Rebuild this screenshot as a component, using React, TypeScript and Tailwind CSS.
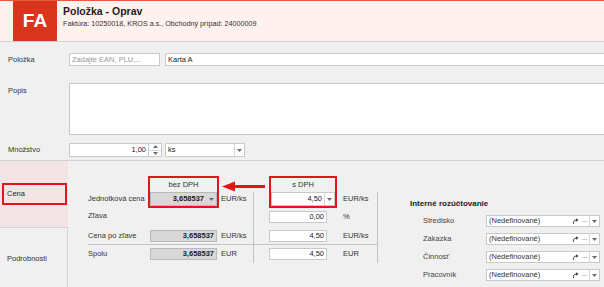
import React from "react";

const border = "border-[#c9c9c9]";

function DropArrow({ divider = true }: { divider?: boolean }) {
  return (
    <div className={`flex h-full w-[10px] shrink-0 items-center justify-center ${divider ? "border-l border-[#d6d6d6]" : ""}`}>
      <svg width="5" height="3" viewBox="0 0 5 3">
        <path d="M0 0h5L2.5 3z" fill="#6b6b6b" />
      </svg>
    </div>
  );
}

function Field({ value, gray, drop, w, className = "" }: { value?: string; gray?: boolean; drop?: boolean; w: string; className?: string }) {
  return (
    <div className={`flex h-[12px] items-center border ${gray ? "border-[#b9b9b9] bg-[#d8d8d8] font-bold" : `${border} bg-white`} ${w} ${className}`}>
      <span className="flex-1 pr-[2px] text-right leading-none text-[#222]">{value}</span>
      {drop && <DropArrow />}
    </div>
  );
}

function JumpIcon() {
  return (
    <svg width="7" height="6" viewBox="0 0 7 6">
      <path d="M1.5 6 C1 3.5 2 2 4.5 2" stroke="#444" strokeWidth="1" fill="none" />
      <path d="M4 0.2 L6.6 2 L4 3.8z" fill="#444" />
    </svg>
  );
}

function Combo({ label }: { label: string }) {
  return (
    <div className="flex h-[12px] items-center">
      <div className="w-[76px] pl-[13px] text-[#444]">{label}</div>
      <div className={`flex h-full w-[114px] items-center border ${border} bg-white`}>
        <span className="flex-1 pl-[2px] leading-none text-[#333]">(Nedefinované)</span>
        <div className="flex items-center gap-[3px] pr-[2px]">
          <JumpIcon />
          <span className="text-[7px] leading-none tracking-[-0.5px] text-[#555]">···</span>
        </div>
        <DropArrow />
      </div>
    </div>
  );
}

export default function App() {
  return (
    <div className="h-[287px] w-[604px] overflow-hidden whitespace-nowrap bg-[#f0f0f0] font-['Liberation_Sans',Arial,sans-serif] text-[7.5px] text-[#333]">
      {/* Header */}
      <header className="flex h-[42px] border-t border-b border-t-[#e85a35] border-b-[#cfcfcf] bg-[#fff1ee]">
        <div className="ml-[13px] flex w-[44px] items-center justify-center bg-[#d9341d] text-[19px] font-bold text-white">FA</div>
        <div className="pl-[6px] pt-[3px]">
          <div className="text-[10.5px] font-bold leading-[14px] text-[#1e1e1e]">Položka - Oprav</div>
          <div className="mt-[1px] text-[7.2px] leading-[10px] text-[#333]">Faktúra: 10250018, KROS a.s., Obchodný prípad: 24000009</div>
        </div>
      </header>

      {/* Form */}
      <div className="mt-[11px] flex h-[13px] items-center">
        <div className="w-[69px] pl-[8px]">Položka</div>
        <div className={`flex h-full w-[91px] items-center border ${border} bg-white pl-[2px] text-[#9a9a9a]`}>Zadajte EAN, PLU,...</div>
        <div className={`ml-[5px] -mr-[2px] flex h-full flex-1 items-center border ${border} bg-white pl-[2px] text-[#222]`}>Karta A</div>
      </div>

      <div className="mt-[17px] flex h-[52px]">
        <div className="w-[69px] pl-[8px] pt-[2px]">Popis</div>
        <div className={`-mr-[2px] h-full flex-1 border ${border} bg-white`} />
      </div>

      <div className="mt-[8px] flex h-[14px] items-center">
        <div className="w-[69px] pl-[8px]">Množstvo</div>
        <div className={`flex h-full w-[80px] items-center justify-end border ${border} bg-white pr-[2px] text-[#222]`}>1,00</div>
        <div className={`flex h-full w-[13px] flex-col border border-l-0 ${border} bg-white`}>
          <div className="flex flex-1 items-center justify-center border-b border-[#d6d6d6]">
            <svg width="5" height="3" viewBox="0 0 5 3"><path d="M0 3h5L2.5 0z" fill="#6b6b6b" /></svg>
          </div>
          <div className="flex flex-1 items-center justify-center">
            <svg width="5" height="3" viewBox="0 0 5 3"><path d="M0 0h5L2.5 3z" fill="#6b6b6b" /></svg>
          </div>
        </div>
        <div className={`ml-[3px] flex h-full w-[80px] items-center border ${border} bg-white`}>
          <span className="flex-1 pl-[2px] text-[#222]">ks</span>
          <DropArrow />
        </div>
      </div>

      <div className="mt-[3px] border-b border-[#d2d2d2]" />

      {/* Price section */}
      <div className="flex h-[126px]">
        <div className="flex w-[68px] flex-col">
          <div className="h-[66px] bg-[#f3e5e5] pt-[22px]">
            <div className="ml-[2px] flex h-[22px] w-[65px] items-center border-2 border-[#e3141b] pl-[3px] text-[#222]">Cena</div>
          </div>
          <div className="flex-1 border-t border-r border-[#d2d2d2] pl-[7px] pt-[26px] leading-[10px]">Podrobnosti</div>
        </div>

        <div className="relative flex flex-1">
          {/* labels */}
          <div className="w-[80px] pt-[15px]">
            <div className="h-[16px]" />
            <div className="flex h-[16px] items-center pl-[20px] pb-[3px]">Jednotková cena</div>
            <div className="flex h-[19px] items-center pl-[20px] pb-[3px]">Zľava</div>
            <div className="flex h-[17px] items-center pl-[20px]">Cena po zľave</div>
            <div className="ml-[20px] flex h-[19px] items-center border-t border-[#c4c4c4]">Spolu</div>
          </div>

          {/* bez DPH */}
          <div className="w-[71px] pt-[15px]">
            <div className="flex h-[32px] flex-col border-2 border-[#e3141b]">
              <div className="flex h-[14px] items-center justify-center text-[#333]">bez DPH</div>
              <Field value="3,658537" gray drop w="w-full" className="h-[14px]" />
            </div>
            <div className="h-[19px]" />
            <div className="flex h-[17px] items-center pl-[2px]">
              <Field value="3,658537" gray w="w-[67px]" />
            </div>
            <div className="flex h-[19px] items-center border-t border-[#c4c4c4] pl-[2px]">
              <Field value="3,658537" gray w="w-[67px]" />
            </div>
          </div>

          {/* units */}
          <div className="w-[34px] pt-[15px]">
            <div className="h-[16px]" />
            <div className="flex h-[16px] items-center pl-[2px] pb-[2px]">EUR/ks</div>
            <div className="h-[19px]" />
            <div className="flex h-[17px] items-center pl-[2px]">EUR/ks</div>
            <div className="flex h-[19px] items-center border-t border-[#c4c4c4] pl-[2px]">EUR</div>
          </div>

          {/* divider */}
          <div className="w-[16px] pt-[15px]">
            <div className="h-[16px]" />
            <div className="h-[52px] border-l border-[#c4c4c4]" />
            <div className="h-[19px] border-t border-l border-[#c4c4c4]" />
          </div>

          {/* s DPH */}
          <div className="w-[68px] pt-[15px]">
            <div className="flex h-[32px] flex-col border-2 border-[#e3141b]">
              <div className="flex h-[14px] items-center justify-center text-[#333]">s DPH</div>
              <Field value="4,50" drop w="w-full" className="h-[14px] font-normal" />
            </div>
            <div className="flex h-[19px] items-center pb-[1px]">
              <Field value="0,00" w="w-[58px]" />
            </div>
            <div className="flex h-[17px] items-center">
              <Field value="4,50" w="w-[58px]" />
            </div>
            <div className="flex h-[19px] items-center border-t border-[#c4c4c4]">
              <Field value="4,50" w="w-[58px]" />
            </div>
          </div>

          {/* s DPH units */}
          <div className="w-[41px] pt-[15px]">
            <div className="h-[16px]" />
            <div className="h-[52px] border-r border-[#c4c4c4]">
              <div className="flex h-[16px] items-center pl-[6px] pb-[2px]">EUR/ks</div>
              <div className="flex h-[19px] items-center pl-[6px] pb-[1px]">%</div>
              <div className="flex h-[17px] items-center pl-[6px]">EUR/ks</div>
            </div>
            <div className="flex h-[19px] items-center border-t border-r border-[#c4c4c4] pl-[6px]">EUR</div>
          </div>

          {/* Interné rozúčtovanie */}
          <div className="flex-1 pl-[32px] pt-[38px]">
            <div className="text-[8px] font-bold leading-[10px] text-[#222]">Interné rozúčtovanie</div>
            <div className="mt-[6px] flex flex-col gap-[6px]">
              <Combo label="Stredisko" />
              <Combo label="Zákazka" />
              <Combo label="Činnosť" />
              <Combo label="Pracovník" />
            </div>
          </div>

          {/* annotation arrow */}
          <svg className="absolute left-[152px] top-[20px]" width="48" height="12" viewBox="0 0 48 12">
            <path d="M2 5.5 L15 0.5 L15 10.5z" fill="#e3141b" />
            <rect x="14" y="4" width="31" height="3" fill="#e3141b" />
          </svg>
        </div>
      </div>
    </div>
  );
}
